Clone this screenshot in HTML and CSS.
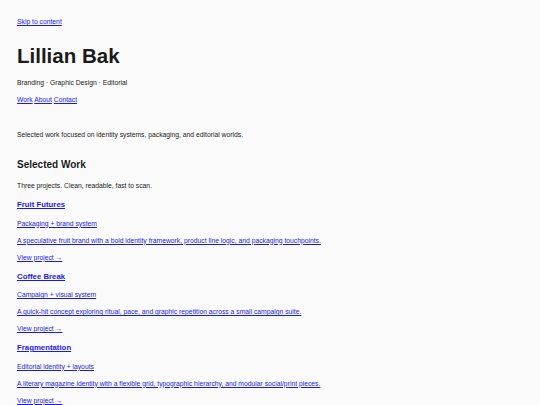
FILE: index.html
```html
<!DOCTYPE html>
<html lang="en">
<head>
<meta charset="utf-8">
<title>Lillian Bak</title>
<link rel="stylesheet" href="styles.css">
</head>
<body>
<div class="page">
  <a class="skip" href="#main">Skip to content</a>
  <header class="header">
    <h1 class="name">Lillian Bak</h1>
    <p class="tagline">Branding · Graphic Design · Editorial</p>
    <nav class="nav"><a href="#work">Work</a> <a href="#about">About</a> <a href="#contact">Contact</a></nav>
  </header>
  <main id="main" class="main">
    <p class="intro">Selected work focused on identity systems, packaging, and editorial worlds.</p>
    <section id="work" class="work">
      <h2 class="work-title">Selected Work</h2>
      <p class="lead">Three projects. Clean, readable, fast to scan.</p>
      <article class="project">
        <h3 class="project-title"><a href="#fruit">Fruit Futures</a></h3>
        <p class="project-line"><a href="#fruit">Packaging + brand system</a></p>
        <p class="project-line"><a href="#fruit">A speculative fruit brand with a bold identity framework, product line logic, and packaging touchpoints.</a></p>
        <p class="project-line"><a href="#fruit">View project →</a></p>
      </article>
      <article class="project">
        <h3 class="project-title"><a href="#coffee">Coffee Break</a></h3>
        <p class="project-line"><a href="#coffee">Campaign + visual system</a></p>
        <p class="project-line"><a href="#coffee">A quick-hit concept exploring ritual, pace, and graphic repetition across a small campaign suite.</a></p>
        <p class="project-line"><a href="#coffee">View project →</a></p>
      </article>
      <article class="project">
        <h3 class="project-title"><a href="#frag">Fragmentation</a></h3>
        <p class="project-line"><a href="#frag">Editorial identity + layouts</a></p>
        <p class="project-line"><a href="#frag">A literary magazine identity with a flexible grid, typographic hierarchy, and modular social/print pieces.</a></p>
        <p class="project-line"><a href="#frag">View project →</a></p>
      </article>
    </section>
  </main>
</div>
</body>
</html>
```

FILE: styles.css
```css
html, body {
  margin: 0;
  padding: 0;
  background: #fafafa;
}
body {
  font-family: "Liberation Sans", Arial, sans-serif;
  font-size: 6.78px;
  line-height: 8px;
  color: #1a1a1a;
}
a {
  color: #1a1ae6;
}
.page {
  padding: 18px 17px 0 17px;
}
.skip {
  display: block;
  width: max-content;
}
.header {
  margin: 0;
}
.name {
  margin: 17.5px 0 0 0;
  font-size: 20.5px;
  line-height: 24px;
  font-weight: 700;
}
.tagline {
  margin: 11px 0 0 0;
}
.nav {
  margin: 9px 0 0 0;
}
.main {
  margin: 0;
}
.intro {
  margin: 27.5px 0 0 0;
}
.work-title {
  margin: 19px 0 0 0;
  font-size: 10px;
  line-height: 13px;
  font-weight: 700;
}
.lead {
  margin: 10.5px 0 0 0;
}
.project {
  margin: 10.5px 0 0 0;
}
.project + .project {
  margin-top: 10px;
}
.project-title {
  margin: 0;
  font-size: 7.8px;
  line-height: 10px;
  font-weight: 700;
}
.project-line {
  margin: 9px 0 0 0;
}
.project-title + .project-line {
  margin-top: 9.5px;
}
```
